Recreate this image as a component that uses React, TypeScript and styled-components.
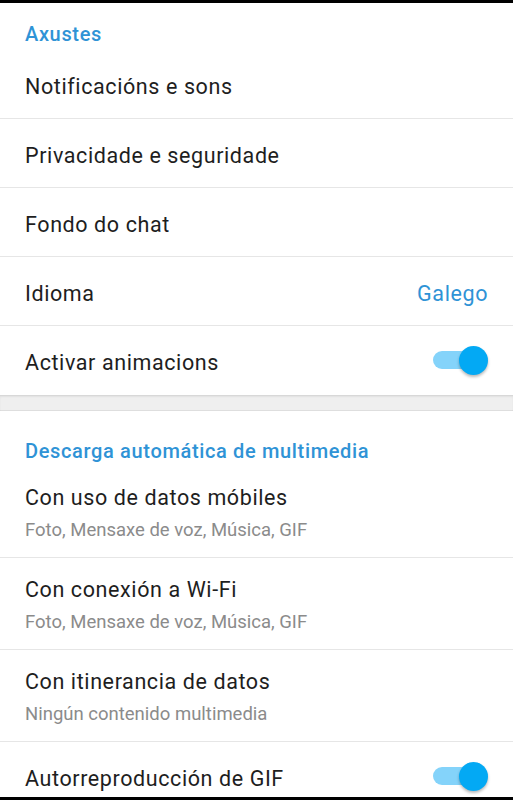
import React from "react";
import styled, { createGlobalStyle } from "styled-components";

const GlobalStyle = createGlobalStyle`
  html, body {
    margin: 0;
    padding: 0;
    background: #000;
  }
  body {
    font-family: Roboto, "Noto Sans", "Liberation Sans", sans-serif;
    -webkit-font-smoothing: antialiased;
  }
`;

type Item =
  | { kind: "text"; title: string; value?: string }
  | { kind: "toggle"; title: string; on: boolean }
  | { kind: "detail"; title: string; subtitle: string };

const general: Item[] = [
  { kind: "text", title: "Notificacións e sons" },
  { kind: "text", title: "Privacidade e seguridade" },
  { kind: "text", title: "Fondo do chat" },
  { kind: "text", title: "Idioma", value: "Galego" },
  { kind: "toggle", title: "Activar animacions", on: true },
];

const media: Item[] = [
  { kind: "detail", title: "Con uso de datos móbiles", subtitle: "Foto, Mensaxe de voz, Música, GIF" },
  { kind: "detail", title: "Con conexión a Wi-Fi", subtitle: "Foto, Mensaxe de voz, Música, GIF" },
  { kind: "detail", title: "Con itinerancia de datos", subtitle: "Ningún contenido multimedia" },
  { kind: "toggle", title: "Autorreproducción de GIF", on: true },
];

function SettingsRow({ item, last }: { item: Item; last: boolean }) {
  if (item.kind === "detail") {
    return (
      <DetailRow $divider={!last}>
        <Title>{item.title}</Title>
        <Subtitle>{item.subtitle}</Subtitle>
      </DetailRow>
    );
  }
  return (
    <Row $divider={!last}>
      <Title>{item.title}</Title>
      {item.kind === "text" && item.value && <Value>{item.value}</Value>}
      {item.kind === "toggle" && (
        <Switch $on={item.on}>
          <Knob $on={item.on} />
        </Switch>
      )}
    </Row>
  );
}

export default function App() {
  return (
    <>
      <GlobalStyle />
      <Screen>
        <Section>
          <Header $top={21} $height={47}>Axustes</Header>
          {general.map((item, i) => (
            <SettingsRow key={item.title} item={item} last={i === general.length - 1} />
          ))}
        </Section>
        <SectionShadow />
        <Section>
          <Header $top={30} $height={55}>Descarga automática de multimedia</Header>
          {media.map((item, i) => (
            <SettingsRow key={item.title} item={item} last={i === media.length - 1} />
          ))}
        </Section>
      </Screen>
    </>
  );
}

const Screen = styled.div`
  height: 800px;
  box-sizing: border-box;
  border-top: 3px solid #000;
  border-bottom: 3px solid #000;
  background: #fff;
  overflow: hidden;
  display: flex;
  flex-direction: column;
`;

const Section = styled.div`
  background: #fff;
  flex-shrink: 0;
`;

const SectionShadow = styled.div`
  height: 16px;
  flex-shrink: 0;
  background: #efefef;
  box-shadow: inset 0 1px 0 #d8d8d8, inset 0 2px 2px rgba(0, 0, 0, 0.06),
    inset 0 -1px 0 #dedede;
`;

const Header = styled.div<{ $top: number; $height: number }>`
  box-sizing: border-box;
  height: ${(p) => p.$height}px;
  padding: ${(p) => p.$top}px 25px 0;
  font-size: 20px;
  line-height: 20px;
  font-weight: 500;
  letter-spacing: 0.65px;
  color: #2f93d6;
`;

const Row = styled.div<{ $divider: boolean }>`
  box-sizing: border-box;
  height: 69px;
  padding: 5px 25px 0;
  display: flex;
  align-items: center;
  justify-content: space-between;
  border-bottom: 1px solid ${(p) => (p.$divider ? "#e6e6e6" : "transparent")};
`;

const DetailRow = styled.div<{ $divider: boolean }>`
  box-sizing: border-box;
  height: 92px;
  padding: 20px 25px 0;
  border-bottom: 1px solid ${(p) => (p.$divider ? "#e6e6e6" : "transparent")};
`;

const Title = styled.div`
  font-size: 21.5px;
  line-height: 24px;
  letter-spacing: 0.6px;
  color: #1e1e1e;
  white-space: nowrap;
`;

const Subtitle = styled.div`
  margin-top: 9px;
  font-size: 18.5px;
  line-height: 22px;
  letter-spacing: 0;
  color: #8b8b8b;
  white-space: nowrap;
`;

const Value = styled.div`
  font-size: 21.5px;
  line-height: 24px;
  letter-spacing: 0.6px;
  color: #2f93d6;
`;

const Switch = styled.div<{ $on: boolean }>`
  position: relative;
  width: 48px;
  height: 18px;
  margin: 0 7px 5px 0;
  border-radius: 9px;
  background: ${(p) => (p.$on ? "#84d3fa" : "#c8c8c8")};
`;

const Knob = styled.div<{ $on: boolean }>`
  position: absolute;
  top: -5.5px;
  left: ${(p) => (p.$on ? "26px" : "-7px")};
  width: 29px;
  height: 29px;
  border-radius: 50%;
  background: ${(p) => (p.$on ? "#03a9f4" : "#fafafa")};
  box-shadow: 0 2px 3px rgba(0, 0, 0, 0.28);
`;
